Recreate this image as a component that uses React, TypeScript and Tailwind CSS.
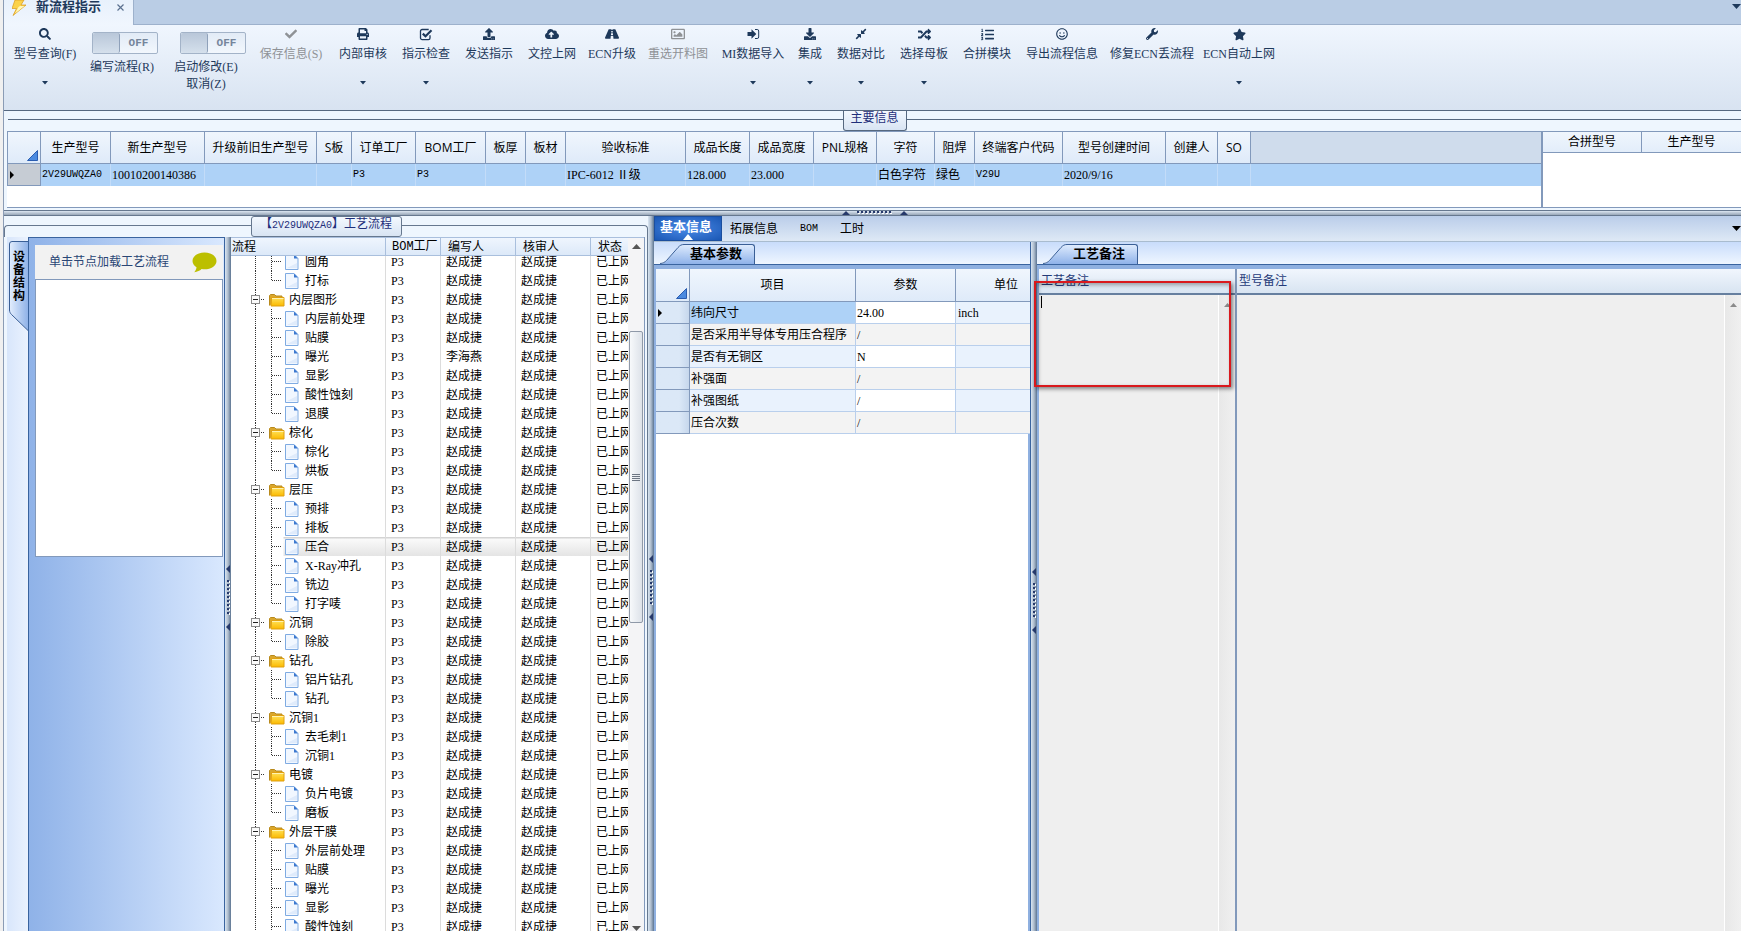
import { ReactNode } from "react";
import {
  FaSearch,
  FaCheck,
  FaPrint,
  FaUpload,
  FaCloudUploadAlt,
  FaRoad,
  FaRegImage,
  FaDownload,
  FaCompressAlt,
  FaRandom,
  FaListOl,
  FaRegSmile,
  FaWrench,
  FaStar,
} from "react-icons/fa";

const CheckSquareIcon = () => (
  <svg width="14" height="13" viewBox="0 0 14 13" fill="none" stroke="currentColor">
    <path d="M11 7.2V10a1.6 1.6 0 0 1-1.6 1.6H3.1A1.6 1.6 0 0 1 1.5 10V3.1a1.6 1.6 0 0 1 1.6-1.6h6.6" strokeWidth="1.3" />
    <path d="M3.8 5.6l2.7 2.7 6-6" strokeWidth="2.2" />
  </svg>
);

const SignInIcon = () => (
  <svg width="13" height="12" viewBox="0 0 13 12">
    <path d="M0.5 4h4V1.2L9.3 6 4.5 10.800V8h-4z" fill="currentColor" />
    <path d="M8 1.500h2.200a1.500 1.500 0 0 1 1.500 1.500v6a1.500 1.500 0 0 1-1.500 1.500H8" fill="none" stroke="currentColor" />
  </svg>
);

const Caret = ({ className = "" }: { className?: string }) => (
  <svg width="6" height="4" viewBox="0 0 6 4" className={className}>
    <path d="M0 0h6L3 3.500z" fill="currentColor" />
  </svg>
);

const BigCaret = ({ className = "" }: { className?: string }) => (
  <svg width="9" height="5" viewBox="0 0 9 5" className={className}>
    <path d="M0 0h9L4.500 5z" fill="currentColor" />
  </svg>
);

interface ToolItem {
  label: string;
  icon: ReactNode;
  width: string;
  menu?: boolean;
  disabled?: boolean;
}

const tools: ToolItem[] = [
  { label: "保存信息(S)", icon: <FaCheck size={12} />, width: "w-[66px]", disabled: true },
  { label: "内部审核", icon: <FaPrint size={12} />, width: "w-12", menu: true },
  { label: "指示检查", icon: <CheckSquareIcon />, width: "w-12", menu: true },
  { label: "发送指示", icon: <FaUpload size={12} />, width: "w-12" },
  { label: "文控上网", icon: <FaCloudUploadAlt size={14} />, width: "w-12" },
  { label: "ECN升级", icon: <FaRoad size={14} />, width: "w-[42px]" },
  { label: "重选开料图", icon: <FaRegImage size={14} />, width: "w-[60px]", disabled: true },
  { label: "MI数据导入", icon: <SignInIcon />, width: "w-[60px]", menu: true },
  { label: "集成", icon: <FaDownload size={12} />, width: "w-6", menu: true },
  { label: "数据对比", icon: <FaCompressAlt size={12} />, width: "w-12", menu: true },
  { label: "选择母板", icon: <FaRandom size={13} />, width: "w-12", menu: true },
  { label: "合拼模块", icon: <FaListOl size={13} />, width: "w-12" },
  { label: "导出流程信息", icon: <FaRegSmile size={12} />, width: "w-[72px]" },
  { label: "修复ECN丢流程", icon: <FaWrench size={12} />, width: "w-[78px]" },
  { label: "ECN自动上网", icon: <FaStar size={13} />, width: "w-[66px]", menu: true },
];

function ToolButton({ label, icon, width, menu, disabled }: ToolItem) {
  return (
    <button
      disabled={disabled}
      className={`flex flex-col items-center pt-0.5 whitespace-nowrap disabled:text-[#8f9296] ${width}`}
    >
      <span className="flex h-3.5 items-center">{icon}</span>
      <span className="mt-1.5 leading-[14px]">{label}</span>
      {menu && <Caret className="mt-5" />}
    </button>
  );
}

function ToggleItem({ id, lines, width }: { id: string; lines: string[]; width: string }) {
  return (
    <div className={`flex flex-col items-end pt-[7px] ${width}`}>
      <label
        htmlFor={id}
        className="flex h-[22px] w-[66px] rounded-[2px] border border-[#a3b3c8] bg-linear-to-b from-[#e2ebf6] to-[#f2f7fd]"
      >
        <input id={id} type="checkbox" className="sr-only" />
        <span className="w-[27px] rounded-[2px] border-r border-[#8fa1ba] bg-linear-to-b from-[#b9c7d9] to-[#d5e0ec]" />
        <span className="flex-1 text-center font-['Liberation_Mono',monospace] text-[11px] leading-5 font-bold text-[#75859b]">OFF</span>
      </label>
      <div className="mt-[5px] w-full whitespace-nowrap leading-[17px]">
        {lines.map((line) => (
          <div key={line} className="w-[66px] text-center">{line}</div>
        ))}
      </div>
    </div>
  );
}

const mainColumns = [
  { title: "生产型号", value: "2V29UWQZA0", width: "w-[70px]" },
  { title: "新生产型号", value: "10010200140386", width: "w-[94px]" },
  { title: "升级前旧生产型号", value: "", width: "w-[112px]" },
  { title: "S板", value: "", width: "w-[35px]" },
  { title: "订单工厂", value: "P3", width: "w-[64px]" },
  { title: "BOM工厂", value: "P3", width: "w-[70px]" },
  { title: "板厚", value: "", width: "w-[40px]" },
  { title: "板材", value: "", width: "w-[40px]" },
  { title: "验收标准", value: "IPC-6012 Ⅱ级", width: "w-[120px]" },
  { title: "成品长度", value: "128.000", width: "w-[64px]" },
  { title: "成品宽度", value: "23.000", width: "w-[64px]" },
  { title: "PNL规格", value: "", width: "w-[63px]" },
  { title: "字符", value: "白色字符", width: "w-[58px]" },
  { title: "阻焊", value: "绿色", width: "w-[40px]" },
  { title: "终端客户代码", value: "V29U", width: "w-[88px]" },
  { title: "型号创建时间", value: "2020/9/16", width: "w-[103px]" },
  { title: "创建人", value: "", width: "w-[52px]" },
  { title: "SO", value: "", width: "w-[33px]" },
];

const CornerMark = () => (
  <svg width="11" height="11" viewBox="0 0 11 11" className="mt-auto ml-auto">
    <path d="M10.500 0.500v10H0.500z" fill="#4a8ae0" stroke="#2a5cb0" />
  </svg>
);

const RowMark = () => (
  <svg width="4" height="8" viewBox="0 0 4 8" className="ml-0.5">
    <path d="M0 0l4 4-4 4z" fill="#000" />
  </svg>
);

function MainGrid() {
  return (
    <table className="w-full table-fixed border-separate border-spacing-0 border-t border-l border-[#8299bb]">
      <thead className="font-['Open_Sans','Noto_Sans_CJK_SC',sans-serif] text-black">
        <tr className="h-8 bg-linear-to-b from-[#f0f6fd] to-[#deeaf9]">
          <th className="w-[33px] border-r border-b border-[#8299bb] pr-0.5 pb-0.5 align-bottom"><CornerMark /></th>
          {mainColumns.map((c) => (
            <th key={c.title} className={`border-r border-b border-[#8299bb] p-0 font-normal whitespace-nowrap ${c.width}`}>
              {c.title}
            </th>
          ))}
          <th className="border-b border-[#8299bb] bg-[#cfdcec]" />
        </tr>
      </thead>
      <tbody>
        <tr className="h-[22px] bg-[#aed2f7] text-black">
          <td className="border-r border-b border-[#8299bb] bg-[#c6ccd4] p-0"><RowMark /></td>
          {mainColumns.map((c) => (
            <td
              key={c.title}
              className={`border-r border-[#c3dcf8] p-0 pl-px whitespace-nowrap ${/^[A-Z0-9]*[A-Z]+[A-Z0-9]*$/.test(c.value) ? "font-['Liberation_Mono',monospace] text-[10px]" : ""}`}
            >
              {c.value}
            </td>
          ))}
          <td />
        </tr>
      </tbody>
    </table>
  );
}

const flow: { name: string; group?: boolean; last?: boolean; author?: string; selected?: boolean }[] = [
  { name: "圆角" },
  { name: "打标", last: true },
  { name: "内层图形", group: true },
  { name: "内层前处理" },
  { name: "贴膜" },
  { name: "曝光", author: "李海燕" },
  { name: "显影" },
  { name: "酸性蚀刻" },
  { name: "退膜", last: true },
  { name: "棕化", group: true },
  { name: "棕化" },
  { name: "烘板", last: true },
  { name: "层压", group: true },
  { name: "预排" },
  { name: "排板" },
  { name: "压合", selected: true },
  { name: "X-Ray冲孔" },
  { name: "铣边" },
  { name: "打字唛", last: true },
  { name: "沉铜", group: true },
  { name: "除胶", last: true },
  { name: "钻孔", group: true },
  { name: "铝片钻孔" },
  { name: "钻孔", last: true },
  { name: "沉铜1", group: true },
  { name: "去毛刺1" },
  { name: "沉铜1", last: true },
  { name: "电镀", group: true },
  { name: "负片电镀" },
  { name: "磨板", last: true },
  { name: "外层干膜", group: true },
  { name: "外层前处理" },
  { name: "贴膜" },
  { name: "曝光" },
  { name: "显影" },
  { name: "酸性蚀刻" },
];

const FolderIcon = () => (
  <svg width="18" height="14" viewBox="0 0 18 14">
    <path d="M1.500 12.500v-10l1-1h4l1.500 1.500h6v3" fill="#d9a62c" stroke="#b98a1c" />
    <path d="M3.500 4.500h12.500v8.500H3z" fill="url(#folder)" stroke="#e0a010" />
    <path d="M4 5.500h11.500" stroke="#fff3b0" />
    <defs>
      <linearGradient id="folder" x1="0" y1="0" x2="0" y2="1">
        <stop offset="0" stopColor="#ffe25a" />
        <stop offset="1" stopColor="#fbb900" />
      </linearGradient>
    </defs>
  </svg>
);

const FileIcon = () => (
  <svg width="15" height="16" viewBox="0 0 15 16">
    <path d="M1.500 0.500h8.500l4 4v11h-12.500z" fill="#f1f7ff" stroke="#7fabe2" />
    <path d="M10 0.500v4h4z" fill="#3b78cf" />
    <path d="M3 14h10V9z" fill="#dfebfb" />
  </svg>
);

const GroupLines = () => (
  <svg width="34" height="19" viewBox="0 0 34 19" shapeRendering="crispEdges">
    <path d="M24.500 0v19M30 9.500h5" stroke="#333" strokeDasharray="1 1" />
    <rect x="20.500" y="5.500" width="8" height="8" fill="#fbfbfb" stroke="#8c8c8c" />
    <path d="M22 9.500h5" stroke="#222" />
  </svg>
);

const LeafLines = ({ last }: { last?: boolean }) => (
  <svg width="52" height="19" viewBox="0 0 52 19" shapeRendering="crispEdges">
    <path d="M24.500 0v19M41 9.500h10" stroke="#333" strokeDasharray="1 1" />
    <path d={last ? "M40.500 0v10" : "M40.500 0v19"} stroke="#333" strokeDasharray="1 1" />
  </svg>
);

const flowCols = (
  <colgroup>
    <col className="w-[155px]" />
    <col className="w-[55px]" />
    <col className="w-[75px]" />
    <col className="w-[75px]" />
    <col />
  </colgroup>
);

function FlowTree() {
  return (
    <div className="flex min-w-0 flex-1 overflow-hidden border-r border-[#8299bb] bg-white text-black">
      <div className="min-w-0 flex-1">
        <table className="relative w-full table-fixed border-separate border-spacing-0">
          {flowCols}
          <thead>
            <tr className="h-[19px] bg-linear-to-b from-[#f0f6fe] to-[#dbe8f8] text-left">
              <th className="border-t border-r border-b border-[#a9bfdd] p-0 pl-px font-normal leading-4">流程</th>
              <th className="border-t border-r border-b border-[#a9bfdd] p-0 pl-1.5 font-['Liberation_Mono','Noto_Sans_CJK_SC',monospace] font-normal leading-4 whitespace-nowrap">BOM工厂</th>
              <th className="border-t border-r border-b border-[#a9bfdd] p-0 pl-[7px] font-normal leading-4">编写人</th>
              <th className="border-t border-r border-b border-[#a9bfdd] p-0 pl-[7px] font-normal leading-4">核审人</th>
              <th className="border-t border-b border-[#a9bfdd] p-0 pl-[7px] font-normal leading-4">状态</th>
            </tr>
          </thead>
        </table>
        <div className="overflow-hidden">
          <table className="-mt-1 w-full table-fixed border-separate border-spacing-0">
            {flowCols}
            <tbody>
              {flow.map((row, idx) => (
                <tr key={idx} className={`h-[19px] leading-[18px] ${row.selected ? "bg-linear-to-b from-[#d4d4d4] from-[1px] via-[#fafafa] via-[2px] to-[#e4e4e4]" : ""}`}>
                  <td className="border-r border-[#dcdcdc] p-0">
                    <div className={`flex h-[19px] items-center ${row.selected ? "bg-linear-to-r from-white from-[52px] to-transparent to-[53px]" : ""}`}>
                      {row.group ? (
                        <>
                          <button aria-label={`折叠${row.name}`}><GroupLines /></button>
                          <span className="ml-[3px]"><FolderIcon /></span>
                          <span className="ml-[3px]">{row.name}</span>
                        </>
                      ) : (
                        <>
                          <LeafLines last={row.last} />
                          <span className="ml-px"><FileIcon /></span>
                          <span className="ml-1.5">{row.name}</span>
                        </>
                      )}
                    </div>
                  </td>
                  <td className="border-r border-[#dcdcdc] p-0 pl-[5px]">P3</td>
                  <td className="border-r border-[#dcdcdc] p-0 pl-[5px]">{row.author || "赵成捷"}</td>
                  <td className="border-r border-[#dcdcdc] p-0 pl-[5px]">赵成捷</td>
                  <td className="overflow-hidden p-0 pl-[5px] whitespace-nowrap">已上网</td>
                </tr>
              ))}
            </tbody>
          </table>
        </div>
      </div>
      <div className="flex w-4 flex-col items-center border-t border-[#a9bfdd] bg-[#f4f4f6]">
        <svg width="9" height="5" viewBox="0 0 9 5" className="mt-1.5"><path d="M0 5h9L4.500 0z" fill="#555" /></svg>
        <div className="mt-[82px] flex h-[292px] w-3.5 flex-col items-center justify-center gap-px rounded-[2px] border border-[#8f99a8] bg-linear-to-r from-[#f7f9fb] to-[#dde2e9]">
          <span className="h-px w-2 bg-[#6d7683]" />
          <span className="h-px w-2 bg-[#6d7683]" />
          <span className="h-px w-2 bg-[#6d7683]" />
          <span className="h-px w-2 bg-[#6d7683]" />
        </div>
        <BigCaret className="mt-auto text-[#555]" />
      </div>
    </div>
  );
}

function VerticalSplitter() {
  return (
    <div className="flex w-1.5 shrink-0 flex-col items-center justify-center bg-linear-to-r from-[#d9e6f3] via-[#aebccc] to-[#5d7592] pt-7">
      <svg width="4" height="66" viewBox="0 0 4 66">
        <path d="M4 0v8L0 4zM4 58v8l-4-4z" fill="#26396b" />
        <path d="M2 15v36" stroke="#26396b" strokeWidth="2" strokeDasharray="2 2" />
        <path d="M3.500 16v36" stroke="#fff" strokeDasharray="2 2" />
      </svg>
    </div>
  );
}

function HorizontalSplitter() {
  return (
    <div className="flex h-[5px] shrink-0 items-end justify-center border-b border-[#66788f] bg-linear-to-b from-[#dce6f1] to-[#98a7b8] pl-1">
      <svg width="66" height="4" viewBox="0 0 66 4">
        <path d="M0 4h8L4 0zM58 4h8l-4-4z" fill="#26396b" />
        <path d="M15 1h36" stroke="#26396b" strokeWidth="2" strokeDasharray="2 2" />
        <path d="M16 2.500h36" stroke="#fff" strokeDasharray="2 2" />
      </svg>
    </div>
  );
}

function SlantTab({ label }: { label: string }) {
  return (
    <div className="flex h-[23px] shrink-0 items-end border-b border-[#3a649f] bg-linear-to-b from-[#c8dcfb] to-[#eff6ff] pl-1.5">
      <button className="flex h-5 items-stretch">
        <svg width="24" height="20" viewBox="0 0 24 20">
          <defs>
            <linearGradient id="slant" x1="0" y1="0" x2="0" y2="1">
              <stop offset="0" stopColor="#deebfd" />
              <stop offset="1" stopColor="#8fb2e9" />
            </linearGradient>
          </defs>
          <path d="M0 20c3 0 5-1.500 6.500-3L18 3.500C20 1.300 21.500 0.500 24 0.500V20z" fill="url(#slant)" />
          <path d="M0 19.500c3 0 5-1.500 6.500-3L18 3.500C20 1.300 21.500 0.500 24 0.500" fill="none" stroke="#3a5f96" />
        </svg>
        <span className="rounded-tr-[3px] border-t border-r border-[#3a5f96] bg-linear-to-b from-[#deebfd] to-[#8fb2e9] pr-3 pl-1.5 text-[13px] leading-[18px] font-bold text-black">
          {label}
        </span>
      </button>
    </div>
  );
}

const params = [
  { name: "纬向尺寸", value: "24.00", unit: "inch" },
  { name: "是否采用半导体专用压合程序", value: "/", unit: "" },
  { name: "是否有无铜区", value: "N", unit: "" },
  { name: "补强面", value: "/", unit: "" },
  { name: "补强图纸", value: "/", unit: "" },
  { name: "压合次数", value: "/", unit: "" },
];

function ParamPane() {
  return (
    <div className="flex w-[377px] shrink-0 flex-col overflow-hidden border-r border-[#3a649f]">
      <SlantTab label="基本参数" />
      <div className="flex-1 border-t-4 border-r-2 border-l-2 border-[#8fb0e0] bg-white">
        <table className="w-[400px] table-fixed border-separate border-spacing-0 text-black">
          <thead className="font-['Open_Sans','Noto_Sans_CJK_SC',sans-serif]">
            <tr className="h-[33px] bg-linear-to-b from-[#f0f6fd] to-[#deeaf9]">
              <th className="w-[34px] border-r border-b border-[#8299bb] pr-0.5 pb-0.5 align-bottom"><CornerMark /></th>
              <th className="w-[166px] border-r border-b border-[#8299bb] p-0 font-normal">项目</th>
              <th className="w-[100px] border-r border-b border-[#8299bb] p-0 font-normal">参数</th>
              <th className="border-b border-[#8299bb] p-0 font-normal">单位</th>
            </tr>
          </thead>
          <tbody>
            {params.map((p, idx) => (
              <tr key={p.name} className={`h-[22px] ${idx % 2 ? "bg-[#f3f3f3]" : "bg-[#e9f2fd]"}`}>
                <td className="border-r border-b border-[#8299bb] bg-linear-to-r from-[#dbe8f7] from-70% to-[#c6d7ec] p-0">
                  {idx === 0 && <RowMark />}
                </td>
                <td className={`border-r border-b border-[#b9cfec] p-0 pl-px whitespace-nowrap ${idx === 0 ? "bg-[#aed2f7]" : ""}`}>{p.name}</td>
                <td className={`border-r border-b border-[#b9cfec] p-0 pl-px ${idx % 2 ? "" : "bg-white"}`}>{p.value}</td>
                <td className="border-b border-[#b9cfec] p-0 pl-0.5">{p.unit}</td>
              </tr>
            ))}
          </tbody>
        </table>
      </div>
    </div>
  );
}

function NoteField({ id, label, className }: { id: string; label: string; className: string }) {
  return (
    <div className={`flex flex-col ${className}`}>
      <label htmlFor={id} className="h-[26px] border-b-2 border-[#667f9f] bg-linear-to-b from-[#f1f6fd] to-[#d8e4f1] pl-0.5 leading-6 text-[#243a78]">
        {label}
      </label>
      <div className="flex min-h-0 flex-1 bg-[#efefef]">
        <textarea id={id} className="min-w-0 flex-1 resize-none overflow-hidden border-r border-white bg-transparent outline-none" />
        <div className="flex w-4 justify-center bg-linear-to-r from-[#e8e8e8] to-[#f0f0f0] pt-1.5">
          <svg width="7" height="4" viewBox="0 0 7 4" className="mt-0.5"><path d="M0 4h7L3.500 0z" fill="#8a8a8a" /></svg>
        </div>
      </div>
    </div>
  );
}

function NotesPane() {
  return (
    <div className="relative flex min-w-0 flex-1 flex-col">
      <SlantTab label="工艺备注" />
      <div className="flex min-h-0 flex-1 border-t-4 border-l-2 border-[#8fb0e0]">
        <NoteField id="craft-note" label="工艺备注" className="w-[198px] border-r-2 border-[#8299bb]" />
        <NoteField id="model-note" label="型号备注" className="min-w-0 flex-1" />
      </div>
      {/* Text cursor of the focused note */}
      <span className="absolute top-[54px] left-1 h-3 w-px bg-black" />
      {/* Highlight frame */}
      <div className="absolute top-[39px] -left-[3px] h-[106px] w-[197px] border-2 border-[#d9191d] shadow-[2px_2px_4px_rgba(0,0,0,0.45),inset_2px_2px_4px_rgba(0,0,0,0.35)]" />
    </div>
  );
}

function DevicePane() {
  return (
    <div className="flex shrink-0">
      <div className="w-[21px] bg-linear-to-r from-[#d8e6fb] to-[#eaf2fe] pt-1 pl-0.5">
        <button className="relative block h-[90px] w-[19px]">
          <svg width="19" height="90" viewBox="0 0 19 90" className="block">
            <defs>
              <linearGradient id="side" x1="0" y1="0" x2="1" y2="0">
                <stop offset="0" stopColor="#e3eefd" />
                <stop offset="1" stopColor="#8fb2e8" />
              </linearGradient>
            </defs>
            <path d="M19 0.500H3A2.500 2.500 0 0 0 0.500 3v66c0 2 1 3.500 2 4.500L19 89.500z" fill="url(#side)" />
            <path d="M19 0.500H3A2.500 2.500 0 0 0 0.500 3v66c0 2 1 3.500 2 4.500L19 89.500" fill="none" stroke="#3a5f96" />
          </svg>
          <span className="absolute top-2.5 left-1 w-3 text-xs leading-[13px] font-bold text-black">设备结构</span>
        </button>
      </div>
      <div className="w-[197px] border-t border-r border-l border-[#3a649f] bg-linear-to-r from-[#8fb2e8] to-[#d9e8fe] pt-[7px] pr-px pl-1.5">
        <div className="flex h-[34px] items-center justify-between bg-[#f2f2f2] pr-1.5 pl-3.5 text-[#2a4675]">
          单击节点加载工艺流程
          <svg width="25" height="21" viewBox="0 0 25 21">
            <path d="M12.500 0.500C5.800 0.500 0.500 4.200 0.500 8.900c0 2.600 1.600 4.800 4 6.300-.2 2-1.100 3.600-2.300 5.100 3.200-.4 5.700-1.700 7.400-3.300 1 .2 1.900.3 2.900.3 6.700 0 12-3.700 12-8.400S19.200 0.500 12.500 0.500z" fill="#bcbf00" />
          </svg>
        </div>
        <div className="h-[278px] border border-[#8299bb] bg-white" />
      </div>
    </div>
  );
}

export default function App() {
  return (
    <div className="flex h-screen overflow-hidden bg-[#f0f0f0] pl-[3px] font-['Liberation_Serif','Noto_Sans_CJK_SC',serif] text-xs text-[#1e395b]">
      <div className="flex min-w-0 flex-1 flex-col border-l border-[#8b9cb5] bg-[#eef6fe]">
        {/* Document tabs */}
        <div className="flex h-[25px] shrink-0 bg-[#bacde5]">
          <div className="flex w-[130px] items-start border-r border-[#9db1cc] bg-linear-to-b from-[#e8f1fc] to-[#f0f6fe] pl-2">
            <svg width="14" height="16" viewBox="0 0 14 16">
              <path d="M3 0h9L9 5h5L1 15.500 4.500 8.500H0z" fill="#fbd24a" stroke="#d99a1c" strokeWidth="0.700" />
              <path d="M8 6h4.500L3 13.500 6.500 7z" fill="#fff6b8" />
            </svg>
            <span className="ml-2.5 text-[13px] leading-[14px] font-bold">新流程指示</span>
            <button aria-label="关闭" className="mt-1 ml-4">
              <svg width="7" height="7" viewBox="0 0 7 7"><path d="M0.500 0.500l6 6M6.500 0.500l-6 6" stroke="#5b7190" strokeWidth="1.200" /></svg>
            </button>
          </div>
          <div className="flex flex-1 items-start justify-end border-b border-[#9db1cc] pt-1">
            <BigCaret className="text-[#1e395b]" />
          </div>
        </div>

        {/* Toolbar */}
        <div className="flex h-[86px] shrink-0 items-start gap-[15px] border-b border-[#56687f] bg-linear-to-b from-[#f0f6fe] to-[#d8e3f1] pl-2">
          <ToolButton label="型号查询(F)" icon={<FaSearch size={12} />} width="w-[66px]" menu />
          <div className="-mr-[3px] -ml-1 flex gap-[15px]">
            <ToggleItem id="edit-flow" lines={["编写流程(R)"]} width="w-[69px]" />
            <ToggleItem id="start-edit" lines={["启动修改(E)", "取消(Z)"]} width="w-[73px]" />
          </div>
          {tools.map((t) => (
            <ToolButton key={t.label} {...t} />
          ))}
        </div>

        {/* Main info */}
        <section className="flex h-[100px] shrink-0 flex-col border-b border-[#66788f]">
          <div className="flex h-5 shrink-0 items-start justify-center pl-1">
            <div className="mt-2 flex-1 border-t border-[#56687f]" />
            <h2 className="h-5 rounded-b-[3px] border border-t-0 border-[#56687f] bg-linear-to-b from-[#f3f8fe] to-[#d8e4f3] px-[7px] leading-[15px] text-[#1f2f7a]">主要信息</h2>
            <div className="mt-2 flex-1 border-t border-[#56687f]" />
          </div>
          <div className="mb-0.5 flex min-h-0 flex-1 pl-[3px]">
            <div className="min-w-0 flex-1 border-b border-[#8299bb] bg-white"><MainGrid /></div>
            <div className="w-[200px] shrink-0 border-b border-l-2 border-[#8299bb] bg-white">
              <table className="w-full table-fixed border-separate border-spacing-0 font-['Open_Sans','Noto_Sans_CJK_SC',sans-serif] text-black">
                <thead>
                  <tr className="h-[22px] bg-linear-to-b from-[#f0f6fd] to-[#e2edfa]">
                    <th className="w-[99px] border-t border-r border-b border-[#8299bb] p-0 font-normal">合拼型号</th>
                    <th className="border-t border-b border-[#8299bb] p-0 font-normal">生产型号</th>
                  </tr>
                </thead>
              </table>
            </div>
          </div>
        </section>

        <HorizontalSplitter />

        <div className="flex min-h-0 flex-1">
          {/* Process flow */}
          <section className="flex w-[644px] shrink-0 flex-col">
            <div className="flex h-[21px] shrink-0 items-start justify-center">
              <div className="mt-[9px] h-3 flex-1 rounded-tl-[4px] border-t border-l border-[#66788f]" />
              <h2 className="h-[21px] w-[151px] rounded-[3px] border border-[#66788f] bg-linear-to-b from-[#f3f8fe] to-[#d8e4f3] text-center leading-[15px] whitespace-nowrap text-[#1f2f7a]">
                【<span className="font-['Liberation_Mono',monospace] text-[10px]">2V29UWQZA0</span>】工艺流程
              </h2>
              <div className="mt-[9px] h-3 flex-1 rounded-tr-[4px] border-t border-r border-[#66788f]" />
            </div>
            <div className="flex min-h-0 flex-1 border-r border-[#66788f] pr-0.5 pl-[3px]">
              <DevicePane />
              <VerticalSplitter />
              <FlowTree />
            </div>
          </section>

          <VerticalSplitter />

          {/* Details */}
          <section className="flex min-w-0 flex-1 flex-col">
            <nav className="flex h-[26px] shrink-0 items-center border-b border-[#a9bccf] bg-linear-to-b from-[#bacde9] to-[#dee9f6] text-black">
              <button className="relative h-[25px] w-[68px] border border-[#1c4f9e] bg-radial from-[#4a8be8] to-[#1a57b4] pr-1 pb-1 text-[13px] leading-5 font-bold text-white">
                基本信息
                <svg width="10" height="6" viewBox="0 0 10 6" className="absolute bottom-0 left-7"><path d="M0 6h10L5 0z" fill="#fff" /></svg>
              </button>
              <button className="ml-2">拓展信息</button>
              <button className="ml-[22px] font-['Liberation_Mono',monospace] text-[10px]">BOM</button>
              <button className="ml-[22px]">工时</button>
              <BigCaret className="ml-auto" />
            </nav>
            <div className="flex min-h-0 flex-1">
              <ParamPane />
              <VerticalSplitter />
              <NotesPane />
            </div>
          </section>
        </div>
      </div>
    </div>
  );
}
